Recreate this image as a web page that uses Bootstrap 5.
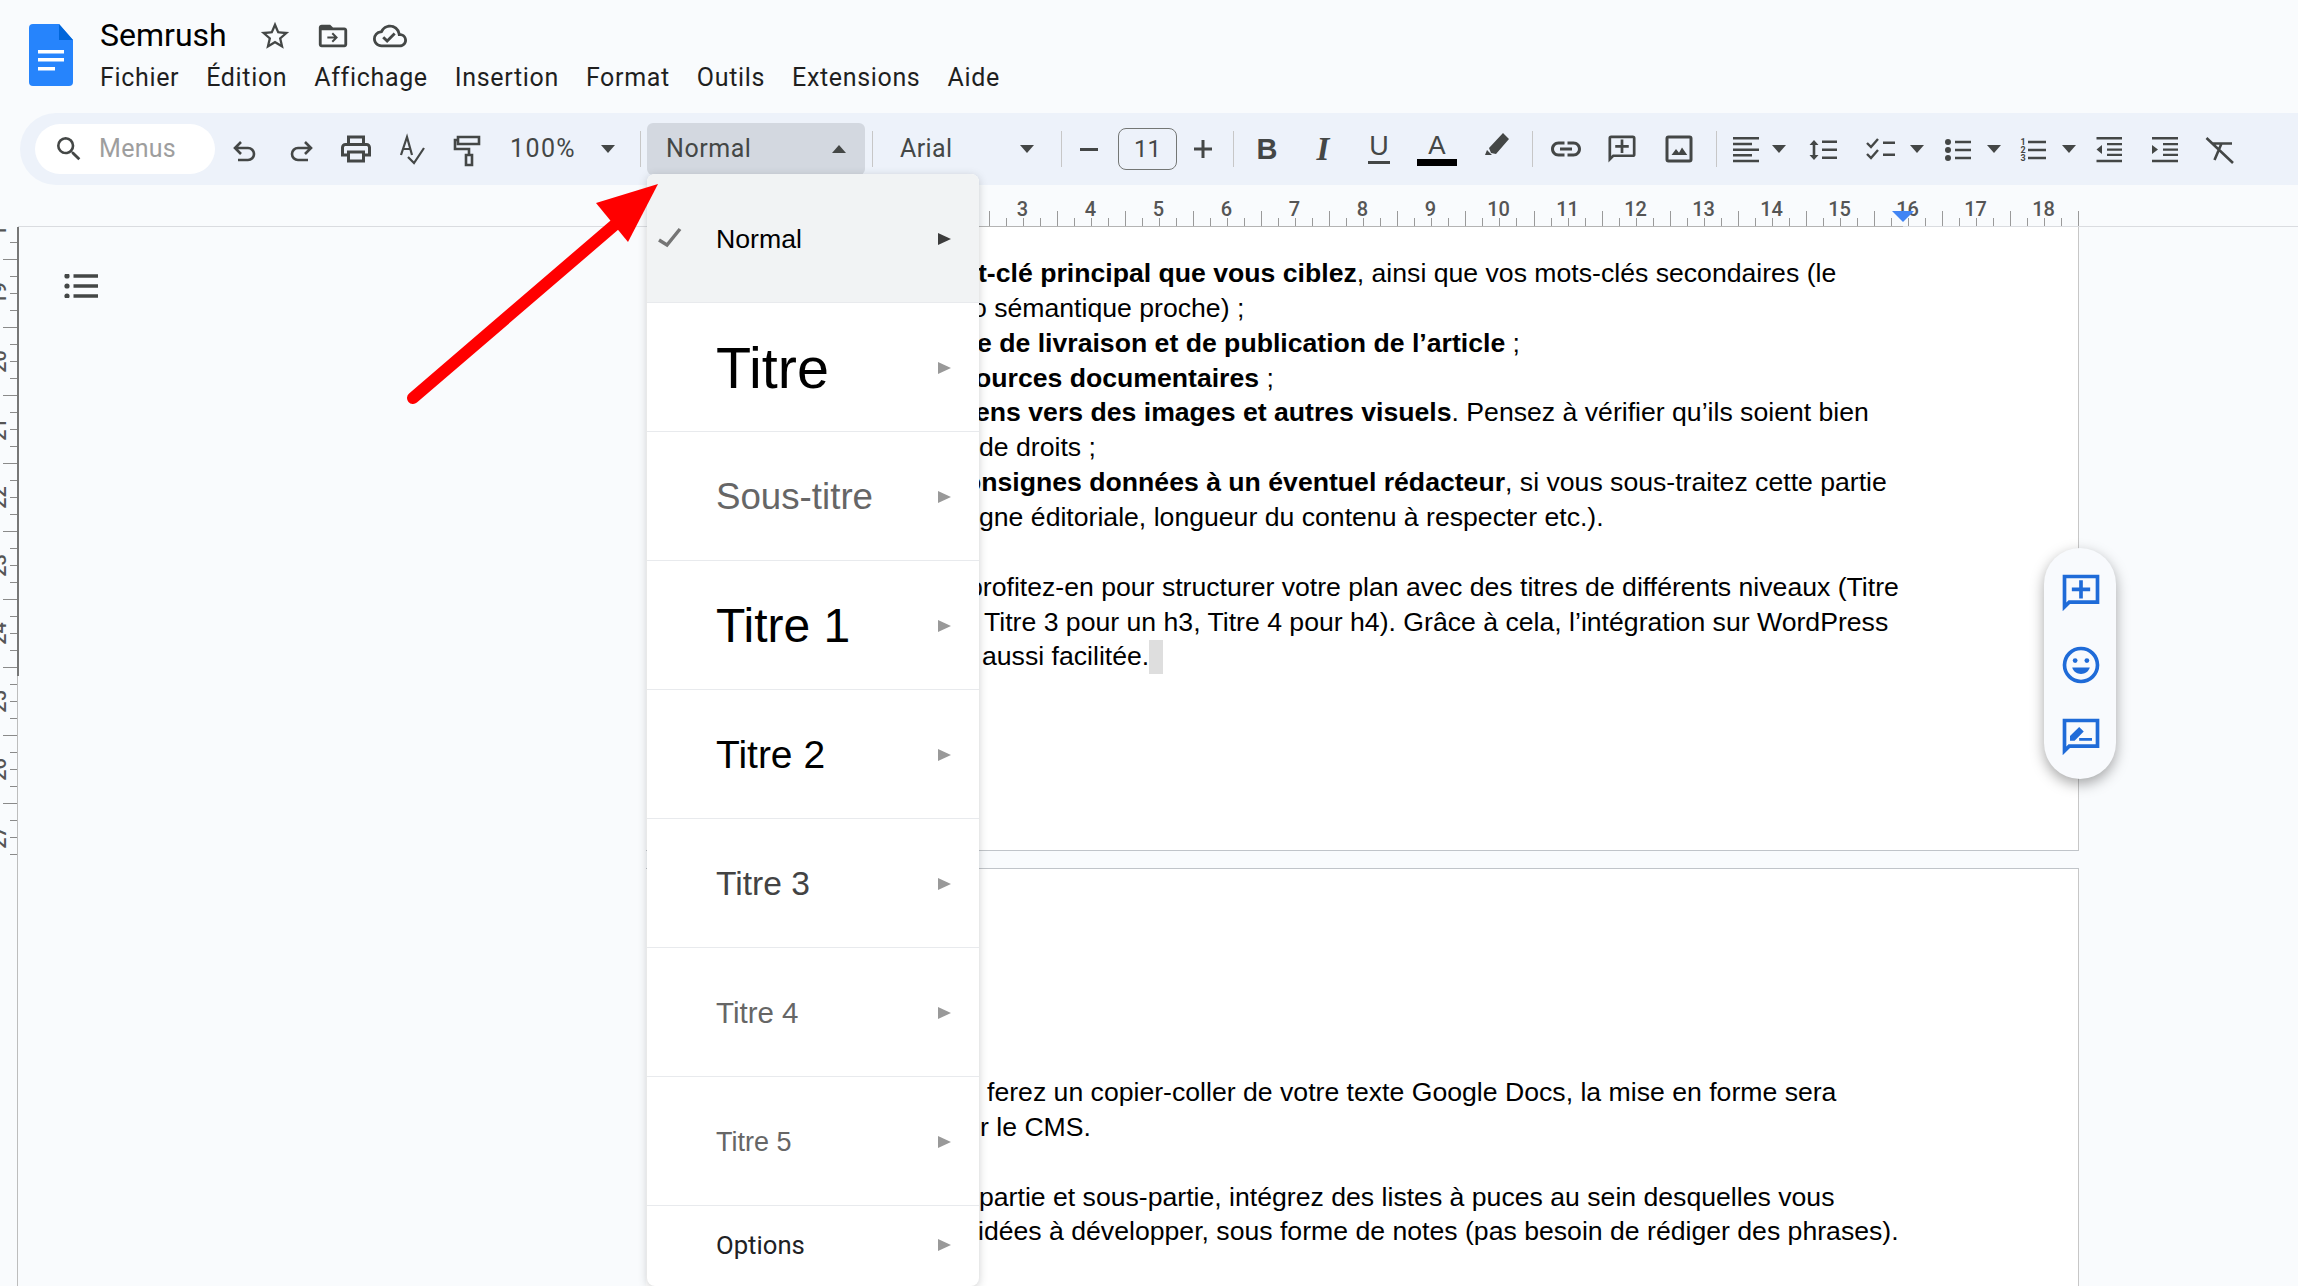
<!DOCTYPE html>
<html lang="fr">
<head>
  <meta charset="UTF-8" />
  <title>Semrush - Google Docs</title>
  <link href="https://cdn.jsdelivr.net/npm/bootstrap@5.3.3/dist/css/bootstrap.min.css" rel="stylesheet">
  <style>
    html, body { height: 100%; }
    body {
      background: #f9fbfd;
      font-family: Roboto, "Liberation Sans", sans-serif;
      color: #1f1f1f;
      width: 2298px;
      height: 1286px;
      overflow: hidden;
      position: relative;
    }
    .gl-6 { margin-left: 6px; } .gl-7 { margin-left: 7px; } .gl-8 { margin-left: 8px; }
    .gl-9 { margin-left: 9px; } .gl-11 { margin-left: 11px; } .gl-12 { margin-left: 12px; }
    .gl-14 { margin-left: 14px; } .gl-15 { margin-left: 15px; } .gl-16 { margin-left: 16px; }
    .gl-17 { margin-left: 17px; } .gl-19 { margin-left: 19px; } .gl-20 { margin-left: 20px; }
    .gl-21 { margin-left: 21px; } .gl-22 { margin-left: 22px; } .gl-23 { margin-left: 23px; }
    .gl-24 { margin-left: 24px; } .gl-25 { margin-left: 25px; } .gl-27 { margin-left: 27px; }
    .gl-31 { margin-left: 31px; }

    /* title bar */
    .top-head { height: 113px; padding-left: 29px; }
    .doc-logo { width: 44px; height: 62px; margin-top: 24px; flex: none; }
    .head-text { margin-left: 27px; }
    .doc-title { height: 67px; padding-top: 15px; font-size: 32px; color: #000; line-height: 40px; }
    .doc-title svg { width: 34px; height: 34px; fill: #444746; margin-top: 4px; }
    .menu-bar { font-size: 25px; line-height: 22px; letter-spacing: .66px; color: #1f1f1f; }
    .menu-bar span + span { margin-left: 27px; }

    /* toolbar */
    .tool-bar {
      height: 72px;
      margin-left: 20px;
      padding-left: 15px;
      background: #edf2fa;
      border-radius: 36px 0 0 36px;
      color: #444746;
      font-size: 25px;
    }
    .search-pill { width: 180px; height: 50px; background: #fff; border-radius: 25px; padding-left: 18px; color: #9e9e9e; letter-spacing: .3px; }
    .search-pill svg { width: 32px; height: 32px; margin-right: 14px; fill: #444746; }
    .tb-ic { width: 36px; height: 36px; flex: none; fill: #444746; }
    .tb-ic.strk { fill: none; stroke: #444746; stroke-width: 2.600; }
    .g-pair { gap: 19.5px; }
    .tb-caret { width: 0; height: 0; border-left: 7px solid transparent; border-right: 7px solid transparent; border-top: 8px solid #444746; flex: none; }
    .tb-caret.up { border-top: 0; border-bottom: 8px solid #444746; }
    .tb-sep { width: 1px; height: 36px; background: #c7c7c7; flex: none; }
    .zoom-val { width: 67px; letter-spacing: 1.4px; }
    .style-btn { width: 218px; height: 52px; background: #d3d8e0; border-radius: 6px; padding: 0 19px; letter-spacing: .55px; }
    .font-pick { width: 134px; letter-spacing: .4px; }
    .size-box { width: 59px; height: 42px; border: 1px solid #747775; border-radius: 8px; font-size: 24px; }
    .tb-letter { width: 36px; height: 36px; flex: none; text-align: center; font-family: "Liberation Sans", sans-serif; line-height: 36px; color: #444746; position: relative; }
    .let-b { font-weight: 700; font-size: 29px; }
    .let-i { font-family: "Liberation Serif", serif; font-style: italic; font-weight: 700; font-size: 33px; }
    .let-u { font-size: 27px; line-height: 30px; }
    .let-u::after { content: ""; position: absolute; left: 7px; right: 7px; bottom: 3px; height: 3px; background: #444746; }
    .let-a { font-size: 26px; line-height: 29px; }
    .let-a::after { content: ""; position: absolute; left: -2px; right: -2px; bottom: 1px; height: 7px; background: #000; }

    /* rulers */
    .ruler-top { height: 42px; display: block; }
    .doc-area { height: 1059px; position: relative; }
    .ruler-left { width: 20px; height: 1059px; flex: none; display: block; }
    .outline-btn { width: 34px; height: 24px; margin-left: 44px; margin-top: 47px; fill: #444746; flex: none; }

    /* pages */
    .pages { width: 1433px; margin-left: auto; margin-right: 219px; font-family: "Liberation Sans", sans-serif; font-size: 26.63px; line-height: 34.86px; color: #000; white-space: nowrap; }
    .doc-page { background: #fff; border-right: 1px solid #c7c7c7; }
    .page-one { height: 624px; padding-top: 29px; border-bottom: 1px solid #c0c4c9; }
    .page-two { height: 420px; margin-top: 17px; padding-top: 206px; border-top: 1px solid #c0c4c9; }
    .empty-line { height: 34.86px; }
    .l1 { margin-left: 332px; } .l2 { margin-left: 326px; } .l3 { margin-left: 331px; }
    .l4 { margin-left: 329px; } .l5 { margin-left: 329px; } .l6 { margin-left: 333px; }
    .l7 { margin-left: 319px; } .l8 { margin-left: 333px; } .l9 { margin-left: 322px; }
    .l10 { margin-left: 338px; } .l11 { margin-left: 336px; } .l12 { margin-left: 341px; }
    .l13 { margin-left: 334px; } .l14 { margin-left: 333px; } .l15 { margin-left: 332px; }
    .cursor-mark { display: inline-block; width: 14px; height: 34px; background: #dedede; vertical-align: -9px; }

    /* style menu */
    .style-menu {
      position: absolute;
      left: 647px;
      top: 174px;
      width: 332px;
      height: 1112px;
      background: #fff;
      border-radius: 8px;
      box-shadow: 0 2px 8px rgba(60, 64, 67, .25);
      overflow: hidden;
      z-index: 5;
      font-family: "Liberation Sans", sans-serif;
      color: #000;
    }
    .style-row { height: 129px; padding: 2px 28px 0 69px; border-bottom: 1px solid #e8eaed; position: relative; }
    .style-row.on { background: #f1f3f4; }
    .style-row.last { height: 81px; padding-top: 0; padding-bottom: 3px; border-bottom: 0; }
    .sub-arrow { width: 0; height: 0; border-left: 13px solid #999; border-top: 6px solid transparent; border-bottom: 6px solid transparent; }
    .on .sub-arrow { border-left-color: #3c3c3c; }
    .tick-mark { position: absolute; left: 10px; top: 53px; width: 26px; height: 22px; }
    .sty-normal { font-size: 26.7px; }
    .sty-titre { font-size: 57.5px; }
    .sty-sous { font-size: 36.7px; color: #666; }
    .sty-h1 { font-size: 48px; }
    .sty-h2 { font-size: 39px; }
    .sty-h3 { font-size: 33.6px; color: #434343; }
    .sty-h4 { font-size: 29.5px; color: #666; }
    .sty-h5 { font-size: 27px; color: #666; }
    .sty-opt { font-family: Roboto, sans-serif; font-size: 25.7px; color: #202124; }

    /* side pill */
    .side-pill { position: absolute; left: 2044px; top: 548px; width: 72px; height: 231px; background: #f8fafd; border-radius: 36px; box-shadow: 0 5px 14px rgba(0, 0, 0, .35); z-index: 4; padding-top: 23px; }
    .side-pill svg { width: 44px; height: 44px; fill: #1f6bd8; display: block; margin-left: 15px; }
    .side-pill svg + svg { margin-top: 28px; }
    .red-arrow { position: absolute; left: 400px; top: 170px; width: 270px; height: 240px; z-index: 6; }
  </style>
</head>
<body>

  <!-- Title + menus -->
  <div class="top-head d-flex">
    <svg class="doc-logo" viewBox="0 0 44 62">
      <path fill="#2684fc" d="M4 0h26l14 16v42a4 4 0 0 1-4 4H4a4 4 0 0 1-4-4V4a4 4 0 0 1 4-4z"/>
      <path fill="#0066da" d="M30 0l14 16H30z"/>
      <path fill="#fff" d="M9 26h26v3.500H9zM9 34h26v3.500H9zM9 43h17v3.500H9z"/>
    </svg>
    <div class="head-text">
      <div class="doc-title d-flex align-items-start">
        <span>Semrush</span>
        <svg class="gl-31" viewBox="0 0 24 24"><path d="M22 9.240l-7.190-.620L12 2 9.190 8.630 2 9.240l5.460 4.730L5.820 21 12 17.270 18.180 21l-1.630-7.030L22 9.240zM12 15.400l-3.760 2.270 1-4.280-3.320-2.880 4.380-.380L12 6.100l1.710 4.040 4.380.380-3.320 2.880 1 4.280L12 15.400z"/></svg>
        <svg class="gl-24" viewBox="0 0 24 24"><path d="M20 6h-8l-2-2H4c-1.100 0-2 .9-2 2v12c0 1.100.9 2 2 2h16c1.100 0 2-.9 2-2V8c0-1.100-.9-2-2-2zm0 12H4V8h16v10z"/><path d="M12 9.500l-1 1 1.800 1.800H8v1.400h4.800L11 15.500l1 1 3.500-3.500z"/></svg>
        <svg class="gl-23" viewBox="0 0 24 24"><path d="M19.350 10.040A7.490 7.490 0 0 0 12 4C9.110 4 6.600 5.640 5.350 8.040A5.994 5.994 0 0 0 0 14c0 3.310 2.690 6 6 6h13c2.760 0 5-2.240 5-5 0-2.640-2.050-4.780-4.650-4.960zM19 18H6c-2.210 0-4-1.790-4-4 0-2.050 1.530-3.760 3.560-3.970l1.070-.110.5-.95A5.469 5.469 0 0 1 12 6c2.620 0 4.880 1.860 5.390 4.430l.3 1.500 1.530.110A2.980 2.980 0 0 1 22 15c0 1.650-1.350 3-3 3zm-9-3.820l-2.090-2.090L6.500 13.500 10 17l6.010-6.010-1.410-1.410z"/></svg>
      </div>
      <div class="menu-bar d-flex">
        <span>Fichier</span><span>Édition</span><span>Affichage</span><span>Insertion</span><span>Format</span><span>Outils</span><span>Extensions</span><span>Aide</span>
      </div>
    </div>
  </div>

  <!-- Toolbar -->
  <div class="tool-bar d-flex align-items-center">
    <div class="search-pill d-flex align-items-center">
      <svg viewBox="0 0 24 24"><path d="M15.500 14h-.79l-.28-.27A6.471 6.471 0 0 0 16 9.500 6.500 6.500 0 1 0 9.500 16c1.610 0 3.090-.59 4.230-1.570l.27.28v.79l5 4.990L20.490 19l-4.990-5zm-6 0C7.010 14 5 11.990 5 9.500S7.010 5 9.500 5 14 7.010 14 9.500 11.990 14 9.500 14z"/></svg>
      <span>Menus</span>
    </div>
    <div class="d-flex g-pair gl-12">
      <svg class="tb-ic strk" viewBox="0 0 36 36"><path d="M14 11l-6 6 6 6M8 17h13a6 6 0 0 1 0 12H11"/></svg>
      <svg class="tb-ic strk" viewBox="0 0 36 36"><path d="M22 11l6 6-6 6M28 17H15a6 6 0 0 0 0 12h10"/></svg>
      <svg class="tb-ic" viewBox="0 0 24 24"><path d="M19 8h-1V3H6v5H5c-1.660 0-3 1.340-3 3v6h4v4h12v-4h4v-6c0-1.660-1.340-3-3-3zM8 5h8v3H8V5zm8 14H8v-4h8v4zm2-4v-2H6v2H4v-4c0-.55.45-1 1-1h14c.55 0 1 .45 1 1v4h-2z"/></svg>
      <svg class="tb-ic strk" viewBox="0 0 36 36"><path d="M7 24L13 6l5 18M9 18h8M14 26l6 6 10-15" stroke-width="2.200"/></svg>
      <svg class="tb-ic strk" viewBox="0 0 36 36"><path d="M9 6h21v7H9zM9 9H6v9h14v6M17 24h6v10h-6z"/></svg>
    </div>
    <span class="zoom-val gl-25">100%</span>
    <span class="tb-caret gl-24"></span>
    <span class="tb-sep gl-25"></span>
    <div class="style-btn gl-6 d-flex align-items-center justify-content-between">
      <span>Normal</span><span class="tb-caret up"></span>
    </div>
    <span class="tb-sep gl-7"></span>
    <div class="font-pick gl-27 d-flex align-items-center justify-content-between">
      <span>Arial</span><span class="tb-caret"></span>
    </div>
    <span class="tb-sep gl-27"></span>
    <svg class="tb-ic gl-9" viewBox="0 0 36 36"><path d="M9 17h18v3H9z"/></svg>
    <div class="size-box gl-11 d-flex align-items-center justify-content-center">11</div>
    <svg class="tb-ic gl-8" viewBox="0 0 36 36"><path d="M9 16.500h7.500V9h3v7.500H27v3h-7.500V27h-3v-7.500H9z"/></svg>
    <span class="tb-sep gl-12"></span>
    <span class="tb-letter let-b gl-15">B</span>
    <span class="tb-letter let-i gl-20">I</span>
    <span class="tb-letter let-u gl-20">U</span>
    <span class="tb-letter let-a gl-22">A</span>
    <svg class="tb-ic gl-24" viewBox="0 0 36 36"><path d="M24 2l6 6-13 15-5-1-2-5zM8 19l5 5H6z"/></svg>
    <span class="tb-sep gl-17"></span>
    <svg class="tb-ic gl-15" viewBox="0 0 24 24"><path d="M17 7h-4v2h4c1.650 0 3 1.350 3 3s-1.350 3-3 3h-4v2h4c2.760 0 5-2.240 5-5s-2.240-5-5-5zm-6 8H7c-1.650 0-3-1.350-3-3s1.350-3 3-3h4V7H7c-2.760 0-5 2.240-5 5s2.240 5 5 5h4v-2zm-3-4h8v2H8z"/></svg>
    <svg class="tb-ic gl-20" viewBox="-1.300 -1.300 26.600 26.600"><path fill-rule="evenodd" d="M20 2H4a2 2 0 0 0-2 2v18l4-4h14a2 2 0 0 0 2-2V4a2 2 0 0 0-2-2zm0 14H5.170L4 17.170V4h16v12zM13 5h-2v4H7v2h4v4h2v-4h4V9h-4z"/></svg>
    <svg class="tb-ic gl-21" viewBox="0 0 24 24"><path fill-rule="evenodd" d="M5 3h14a2 2 0 0 1 2 2v14a2 2 0 0 1-2 2H5a2 2 0 0 1-2-2V5a2 2 0 0 1 2-2zm0 2v14h14V5H5zm2 11l3-4 2 2.500 2-3.500 3.500 5H7z"/></svg>
    <span class="tb-sep gl-19"></span>
    <svg class="tb-ic gl-11" viewBox="0 0 36 36"><path d="M5 6h26v2.600H5zM5 11.700h19v2.600H5zM5 17.400h26v2.600H5zM5 23h19v2.600H5zM5 28.700h26v2.600H5z"/></svg>
    <span class="tb-caret gl-8"></span>
    <svg class="tb-ic gl-19" viewBox="0 0 36 36"><path d="M17 9.500h15v2.600H17zM17 17.500h15v2.600H17zM17 25.500h15v2.600H17zM9 9l4.500 5H10.300v10h3.200L9 29l-4.500-5h3.200V14H4.500z"/></svg>
    <svg class="tb-ic gl-22" viewBox="0 0 36 36"><path d="M20 10.500h12v2.600H20zM20 22.500h12v2.600H20z"/><path fill="none" stroke="#444746" stroke-width="2.400" d="M4 12l4 4 7-8M4 23l4 4 7-8"/></svg>
    <span class="tb-caret gl-11"></span>
    <svg class="tb-ic gl-16" viewBox="0 0 36 36"><circle cx="8" cy="11" r="3"/><circle cx="8" cy="19" r="3"/><circle cx="8" cy="27" r="3"/><path d="M15 9.700h16v2.600H15zM15 17.700h16v2.600H15zM15 25.700h16v2.600H15z"/></svg>
    <span class="tb-caret gl-11"></span>
    <svg class="tb-ic gl-14" viewBox="0 0 36 36"><text x="8" y="14" font-family="Roboto, sans-serif" font-size="9" font-weight="700" text-anchor="middle">1</text><text x="8" y="22" font-family="Roboto, sans-serif" font-size="9" font-weight="700" text-anchor="middle">2</text><text x="8" y="30" font-family="Roboto, sans-serif" font-size="9" font-weight="700" text-anchor="middle">3</text><path d="M13 9.700h18v2.600H13zM13 17.700h18v2.600H13zM13 25.700h18v2.600H13z"/></svg>
    <span class="tb-caret gl-11"></span>
    <svg class="tb-ic gl-15" viewBox="0 0 36 36"><path d="M5.500 6h25.500v2.600H5.500zM5.500 28.700h25.500v2.600H5.500zM16 12h15v2.300H16zM16 17.400h15v2.300H16zM16 22.800h15v2.300H16zM11 14v9l-5.500-4.500z"/></svg>
    <svg class="tb-ic gl-20" viewBox="0 0 36 36"><path d="M5 6h26v2.600H5zM5 28.700h26v2.600H5zM16 12h15v2.300H16zM16 17.400h15v2.300H16zM16 22.800h15v2.300H16zM5 14v9l6-4.500z"/></svg>
    <svg class="tb-ic strk gl-19" viewBox="0 0 36 36"><path d="M4.500 7L31 32M11 12.500h19M19.500 12.500L12.500 29"/></svg>
  </div>

  <!-- Horizontal ruler -->
  <svg id="rulerH" class="ruler-top" width="2298" height="42" viewBox="0 185 2298 42"></svg>

  <div class="doc-area d-flex">
    <svg id="rulerV" class="ruler-left" viewBox="0 227 20 1059"></svg>
    <svg class="outline-btn" viewBox="0 0 34 24"><circle cx="3" cy="2" r="2.600"/><circle cx="3" cy="12" r="2.600"/><circle cx="3" cy="22" r="2.600"/><path d="M9.500 .3h24.500v3.400H9.500zM9.500 10.300h24.500v3.400H9.500zM9.500 20.300h24.500v3.400H9.500z"/></svg>

    <div class="pages">
      <div class="doc-page page-one">
        <div class="l1"><b>t-clé principal que vous ciblez</b>, ainsi que vos mots-clés secondaires (le</div>
        <div class="l2">o sémantique proche) ;</div>
        <div class="l3"><b>e de livraison et de publication de l’article</b> ;</div>
        <div class="l4"><b>ources documentaires</b> ;</div>
        <div class="l5"><b>ens vers des images et autres visuels</b>. Pensez à vérifier qu’ils soient bien</div>
        <div class="l6">de droits ;</div>
        <div class="l7"><b>onsignes données à un éventuel rédacteur</b>, si vous sous-traitez cette partie</div>
        <div class="l8">gne éditoriale, longueur du contenu à respecter etc.).</div>
        <div class="empty-line"></div>
        <div class="l9">profitez-en pour structurer votre plan avec des titres de différents niveaux (Titre</div>
        <div class="l10">Titre 3 pour un h3, Titre 4 pour h4). Grâce à cela, l’intégration sur WordPress</div>
        <div class="l11">aussi facilitée.<span class="cursor-mark"></span></div>
      </div>
      <div class="doc-page page-two">
        <div class="l12">ferez un copier-coller de votre texte Google Docs, la mise en forme sera</div>
        <div class="l13">r le CMS.</div>
        <div class="empty-line"></div>
        <div class="l14">partie et sous-partie, intégrez des listes à puces au sein desquelles vous</div>
        <div class="l15">idées à développer, sous forme de notes (pas besoin de rédiger des phrases).</div>
      </div>
    </div>
  </div>

  <!-- Paragraph styles menu -->
  <div class="style-menu">
    <div class="style-row on d-flex align-items-center justify-content-between">
      <svg class="tick-mark" viewBox="0 0 26 22"><path d="M2 13l8 5L23 2" fill="none" stroke="#757575" stroke-width="3.500"/></svg>
      <span class="sty-normal">Normal</span><span class="sub-arrow"></span>
    </div>
    <div class="style-row d-flex align-items-center justify-content-between"><span class="sty-titre">Titre</span><span class="sub-arrow"></span></div>
    <div class="style-row d-flex align-items-center justify-content-between"><span class="sty-sous">Sous-titre</span><span class="sub-arrow"></span></div>
    <div class="style-row d-flex align-items-center justify-content-between"><span class="sty-h1">Titre 1</span><span class="sub-arrow"></span></div>
    <div class="style-row d-flex align-items-center justify-content-between"><span class="sty-h2">Titre 2</span><span class="sub-arrow"></span></div>
    <div class="style-row d-flex align-items-center justify-content-between"><span class="sty-h3">Titre 3</span><span class="sub-arrow"></span></div>
    <div class="style-row d-flex align-items-center justify-content-between"><span class="sty-h4">Titre 4</span><span class="sub-arrow"></span></div>
    <div class="style-row d-flex align-items-center justify-content-between"><span class="sty-h5">Titre 5</span><span class="sub-arrow"></span></div>
    <div class="style-row last d-flex align-items-center justify-content-between"><span class="sty-opt">Options</span><span class="sub-arrow"></span></div>
  </div>

  <!-- Side actions -->
  <div class="side-pill">
    <svg viewBox="0 0 24 24"><path fill-rule="evenodd" d="M22 2H2v20l4-4h16zM20 16H5.200L4 17.200V4h16zM13 5h-2v4H7v2h4v4h2v-4h4V9h-4z"/></svg>
    <svg viewBox="0 0 24 24"><path fill-rule="evenodd" d="M12 2a10 10 0 1 0 0 20 10 10 0 0 0 0-20zm0 2a8 8 0 1 1 0 16 8 8 0 0 1 0-16z"/><circle cx="8.800" cy="9.600" r="1.300"/><circle cx="15.200" cy="9.600" r="1.300"/><path d="M7.200 13.400h9.600c-.7 2.300-2.600 3.500-4.800 3.500s-4.100-1.200-4.800-3.500z"/></svg>
    <svg viewBox="0 0 24 24"><path fill-rule="evenodd" d="M22 2H2v20l4-4h16zM20 16H5.200L4 17.200V4h16z"/><path d="M6 14v-2.500l5-5 2.500 2.500-5 5zM11 12.500h7V14h-7z"/></svg>
  </div>

  <!-- Annotation arrow -->
  <svg class="red-arrow" viewBox="400 170 270 240">
    <path d="M413 398L618 222" stroke="#f00" stroke-width="12" stroke-linecap="round"/>
    <path d="M658 184L596 203 628 242z" fill="#f00"/>
  </svg>

  <script>
    const NS = "http://www.w3.org/2000/svg";
    const CM = 68.07;
    function add(svg, tag, attrs, text) {
      const el = document.createElementNS(NS, tag);
      for (const k in attrs) el.setAttribute(k, attrs[k]);
      if (text) el.textContent = text;
      svg.appendChild(el);
    }

    const rh = document.getElementById("rulerH");
    add(rh, "path", { d: "M18 226.500H2298", stroke: "#dadce0" });
    add(rh, "path", { d: "M979 226.500H1903", stroke: "#b4b4b4" });
    for (let k = 0; k <= 16; k++) {
      const x = Math.round(989 + CM * k) + .5;
      add(rh, "path", { d: `M${x} 211V226`, stroke: "#9a9a9a" });
      if (k === 16) break;
      [17, 34, 51].forEach(o => add(rh, "path", { d: `M${x + o} 218V226`, stroke: "#9a9a9a" }));
      add(rh, "text", { x: x + 33, y: 216, "text-anchor": "middle", "font-family": "Roboto, sans-serif", "font-size": 20, "font-weight": 500, fill: "#555" }, String(k + 3));
    }
    add(rh, "path", { d: "M1892 211h22l-11 11z", fill: "#4285f4" });

    const rv = document.getElementById("rulerV");
    add(rv, "path", { d: "M17.500 226V1286", stroke: "#bdbdbd" });
    add(rv, "path", { d: "M18 226V676", stroke: "#777", "stroke-width": 2 });
    for (let k = 0; k <= 9; k++) {
      const y = Math.round(190.500 + 68 * k) + .5;
      add(rv, "path", { d: `M3 ${y}H17`, stroke: "#8a8a8a" });
      [17, 34, 51].forEach(o => add(rv, "path", { d: `M10 ${y + o}H17`, stroke: "#8a8a8a" }));
      const ty = y + 34;
      add(rv, "text", { x: 6, y: ty, "text-anchor": "middle", transform: `rotate(-90 6 ${ty})`, "font-family": "Roboto, sans-serif", "font-size": 20, "font-weight": 500, fill: "#555" }, String(18 + k));
    }
  </script>
  <script src="https://cdn.jsdelivr.net/npm/bootstrap@5.3.3/dist/js/bootstrap.bundle.min.js"></script>
</body>
</html>
